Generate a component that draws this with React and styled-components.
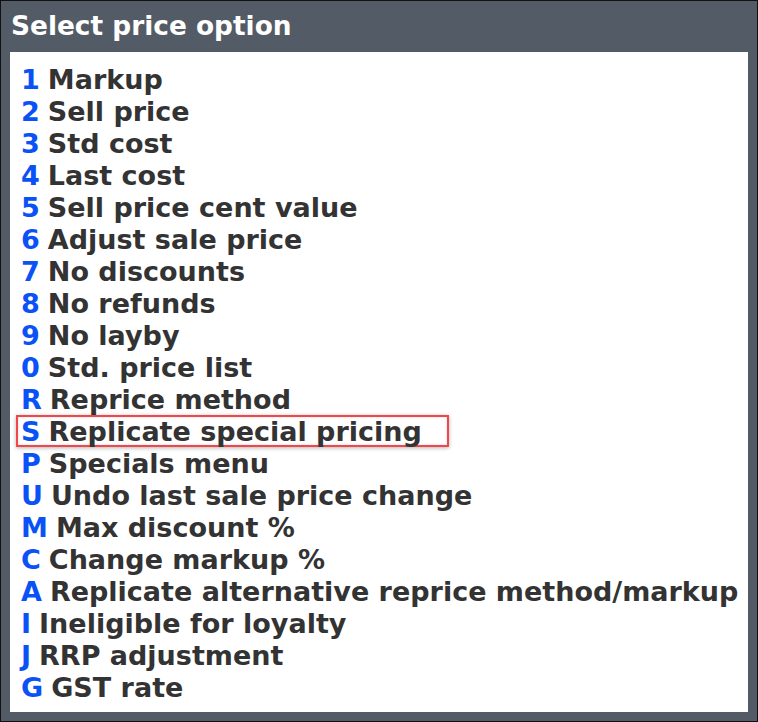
import React from "react";
import styled, { createGlobalStyle } from "styled-components";

const options = [
  ["1", "Markup"],
  ["2", "Sell price"],
  ["3", "Std cost"],
  ["4", "Last cost"],
  ["5", "Sell price cent value"],
  ["6", "Adjust sale price"],
  ["7", "No discounts"],
  ["8", "No refunds"],
  ["9", "No layby"],
  ["0", "Std. price list"],
  ["R", "Reprice method"],
  ["S", "Replicate special pricing", true],
  ["P", "Specials menu"],
  ["U", "Undo last sale price change"],
  ["M", "Max discount %"],
  ["C", "Change markup %"],
  ["A", "Replicate alternative reprice method/markup"],
  ["I", "Ineligible for loyalty"],
  ["J", "RRP adjustment"],
  ["G", "GST rate"],
];

const App = () => {
  return (
    <>
      <GlobalStyle />
      <Dialog>
        <Title>Select price option</Title>
        <Panel>
          {options.map(([key, label, marked]) => (
            <Option key={key} $marked={marked}>
              <Key>{key}</Key>
              <Label>{label}</Label>
            </Option>
          ))}
        </Panel>
      </Dialog>
    </>
  );
};

export default App;

const GlobalStyle = createGlobalStyle`
  body {
    margin: 0;
    background: #ffffff;
    font-family: "DejaVu Sans", Verdana, sans-serif;
  }
`;

const Dialog = styled.div`
  width: 758px;
  height: 722px;
  box-sizing: border-box;
  border: 1px solid #111;
  background-color: #535c66;
  padding: 0 9px 9px 9px;
  display: flex;
  flex-direction: column;
`;

const Title = styled.div`
  height: 51px;
  display: flex;
  align-items: center;
  padding: 0 0 2px 1px;
  box-sizing: border-box;
  color: #ffffff;
  font-weight: bold;
  font-size: 26.4px;
`;

const Panel = styled.div`
  flex: 1;
  background: #ffffff;
  padding: 11px 0 0 11px;
  display: flex;
  flex-direction: column;
`;

const Option = styled.div`
  display: flex;
  align-items: center;
  gap: 8px;
  height: 32px;
  font-weight: bold;
  font-size: 27px;
  white-space: nowrap;
  width: fit-content;
  padding: 0 25px 0 3px;
  margin-left: -5px;
  box-sizing: border-box;
  border: 2px solid ${(p) => (p.$marked ? "#f0474a" : "transparent")};
  box-shadow: ${(p) =>
    p.$marked ? "0 1px 4px rgba(0,0,0,0.3), inset 0 0 3px rgba(0,0,0,0.15)" : "none"};
`;

const Key = styled.span`
  color: #0a52f5;
`;

const Label = styled.span`
  color: #333333;
`;
